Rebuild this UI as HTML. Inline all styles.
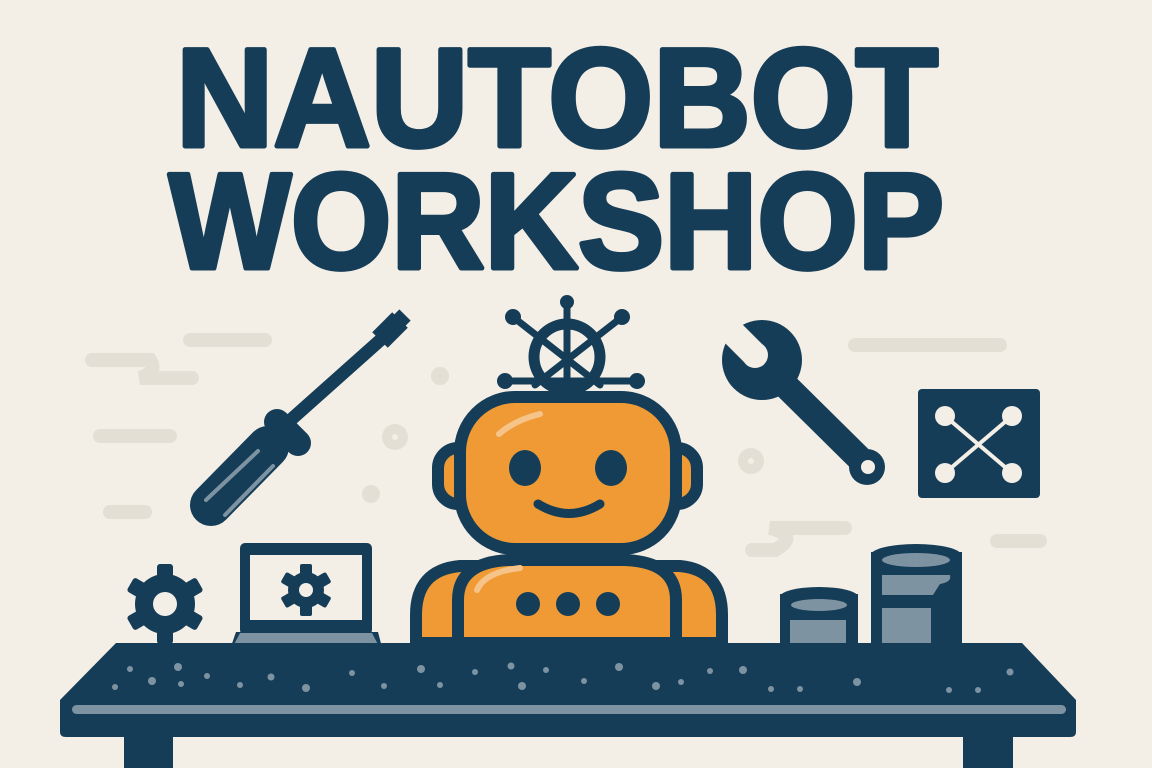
<!DOCTYPE html>
<html><head><meta charset="utf-8"><style>
html,body{margin:0;padding:0;background:#f4efe6;}
svg{display:block}
</style></head><body>
<svg width="1152" height="768" viewBox="0 0 1152 768" xmlns="http://www.w3.org/2000/svg">
<rect width="1152" height="768" fill="#f4efe6"/>
<g fill="#163d57" stroke="#163d57" stroke-width="5" stroke-linejoin="round" font-family="Liberation Sans, Arial, sans-serif" font-weight="bold">
<text x="176" y="146" font-size="140" textLength="762" lengthAdjust="spacingAndGlyphs">NAUTOBOT</text>
<text x="169" y="268" font-size="136" textLength="775" lengthAdjust="spacingAndGlyphs">WORKSHOP</text>
</g>
<!-- background decorations -->
<g stroke="#e4dfd5" stroke-linecap="round" fill="none" stroke-width="14">
<line x1="190" y1="340" x2="265" y2="340"/>
<path d="M92 360 H150 Q158 372 140 378 H192"/>
<line x1="100" y1="436" x2="170" y2="436"/>
<line x1="110" y1="512" x2="145" y2="512"/>
<line x1="855" y1="345" x2="1000" y2="345"/>
<path d="M845 528 H770 Q800 536 775 550 H752"/>
<line x1="997" y1="541" x2="1040" y2="541"/>
</g>
<g fill="#e4dfd5">
<circle cx="395" cy="437" r="13"/><circle cx="395" cy="437" r="3" fill="#f4efe6"/>
<circle cx="371" cy="494" r="9"/>
<circle cx="440" cy="376" r="9"/>
<circle cx="751" cy="461" r="13"/><circle cx="751" cy="461" r="3" fill="#f4efe6"/>
</g>
<!-- screwdriver -->
<g fill="#163d57" stroke="#163d57" stroke-linecap="round">
<line x1="395" y1="327" x2="285" y2="425" stroke-width="13"/>
<line x1="400" y1="320" x2="380" y2="340" stroke-width="22" stroke-linecap="butt"/>
<line x1="405" y1="315" x2="398" y2="322" stroke-width="16" stroke-linecap="butt"/>
<line x1="277" y1="422" x2="298" y2="443" stroke-width="26"/>
<line x1="268" y1="447" x2="211" y2="505" stroke-width="42"/>
</g>
<g stroke="#7e93a2" stroke-width="4" stroke-linecap="round">
<line x1="258" y1="451" x2="206" y2="500"/>
<line x1="273" y1="466" x2="225" y2="515"/>
</g>
<!-- wrench -->
<g fill="#163d57" stroke="#163d57" stroke-linecap="round">
<circle cx="762" cy="360" r="40" stroke="none"/>
<line x1="780" y1="380" x2="866" y2="465" stroke-width="26"/>
<circle cx="867" cy="467" r="18" stroke="none"/>
</g>
<g fill="#f4efe6">
<polygon points="764,346 724,306 706,324 746,364"/>
<circle cx="755" cy="355" r="13"/>
<circle cx="868" cy="467" r="7"/>
</g>
<!-- network box -->
<rect x="918" y="389" width="122" height="109" rx="4" fill="#163d57"/>
<g stroke="#f4efe6" stroke-width="4"><line x1="945" y1="416" x2="1012" y2="473"/><line x1="1012" y1="416" x2="945" y2="473"/></g>
<g fill="#f4efe6"><circle cx="945" cy="416" r="10"/><circle cx="1012" cy="416" r="10"/><circle cx="945" cy="473" r="10"/><circle cx="1012" cy="473" r="10"/></g>
<!-- cans -->
<g>
<rect x="780" y="594" width="78" height="75" fill="#163d57"/>
<ellipse cx="819" cy="597" rx="39" ry="10" fill="#163d57"/>
<ellipse cx="819" cy="605" rx="28" ry="6" fill="#7e93a2"/>
<path d="M790 620 H846 V666 Q818 676 790 666 Z" fill="#7e93a2"/>
<rect x="871" y="552" width="91" height="120" fill="#163d57"/>
<ellipse cx="916" cy="555" rx="45" ry="11" fill="#163d57"/>
<ellipse cx="916" cy="560" rx="34" ry="7" fill="#7e93a2"/>
<path d="M882 575 H950 Q952 582 940 584 Q936 590 933 595 H882 Z" fill="#7e93a2"/>
<path d="M882 608 H931 V668 Q906 676 882 668 Z" fill="#7e93a2"/>
</g>
<!-- gears -->
<g fill="#163d57">
<g transform="translate(165,604)">
<circle r="30"/>
<rect x="-8" y="-40" width="16" height="16" rx="3"/>
<rect x="-8" y="-40" width="16" height="16" rx="3" transform="rotate(60)"/>
<rect x="-8" y="-40" width="16" height="16" rx="3" transform="rotate(120)"/>
<rect x="-8" y="-40" width="16" height="16" rx="3" transform="rotate(180)"/>
<rect x="-8" y="-40" width="16" height="16" rx="3" transform="rotate(240)"/>
<rect x="-8" y="-40" width="16" height="16" rx="3" transform="rotate(300)"/>
<circle r="12" fill="#f4efe6"/>
</g>
</g>
<!-- laptop -->
<rect x="240" y="543" width="132" height="92" rx="5" fill="#163d57"/>
<rect x="250" y="555" width="112" height="65" fill="#f4efe6"/>
<g fill="#163d57" transform="translate(306,590)">
<circle r="18"/>
<rect x="-6" y="-26" width="12" height="11" rx="2"/>
<rect x="-6" y="-26" width="12" height="11" rx="2" transform="rotate(60)"/>
<rect x="-6" y="-26" width="12" height="11" rx="2" transform="rotate(120)"/>
<rect x="-6" y="-26" width="12" height="11" rx="2" transform="rotate(180)"/>
<rect x="-6" y="-26" width="12" height="11" rx="2" transform="rotate(240)"/>
<rect x="-6" y="-26" width="12" height="11" rx="2" transform="rotate(300)"/>
<circle r="7" fill="#f4efe6"/>
</g>
<path d="M236 632 H378 L384 655 H228 Z" fill="#163d57"/>
<path d="M240 633 H372 L383 654 H229 Z" fill="#7e93a2"/>
<rect x="288" y="645" width="37" height="10" rx="5" fill="#163d57"/>
<!-- helm -->
<g stroke="#163d57" fill="none" stroke-linecap="round">
<circle cx="567" cy="357" r="33" stroke-width="11"/>
<g stroke-width="7">
<line x1="567" y1="300" x2="567" y2="395"/>
<line x1="513" y1="317" x2="600" y2="385"/>
<line x1="622" y1="317" x2="535" y2="385"/>
<line x1="505" y1="381" x2="630" y2="381"/>
</g>
</g>
<g fill="#163d57"><circle cx="567" cy="302" r="7"/><circle cx="513" cy="317" r="8"/><circle cx="622" cy="317" r="8"/><circle cx="505" cy="381" r="8"/><circle cx="637" cy="381" r="8"/></g>
<!-- robot body -->
<g stroke="#163d57" stroke-width="12" fill="#ef9a35">
<path d="M416 643 V615 Q416 570 460 566 H680 Q722 570 722 615 V643 Z"/>
<path d="M458 643 V600 Q458 562 510 560 H625 Q676 562 676 600 V643 Z"/>
<rect x="438" y="448" width="44" height="56" rx="20"/>
<rect x="653" y="448" width="44" height="56" rx="20"/>
<rect x="460" y="397" width="216" height="152" rx="55"/>
</g>
<g stroke="#f6c489" stroke-width="6" stroke-linecap="round" fill="none">
<path d="M499 434 Q515 420 540 414"/>
<path d="M477 590 Q485 572 520 568"/>
</g>
<g fill="#163d57">
<ellipse cx="525" cy="468" rx="16" ry="18"/><ellipse cx="611" cy="468" rx="16" ry="18"/>
<circle cx="528" cy="604" r="12"/><circle cx="568" cy="604" r="12"/><circle cx="608" cy="604" r="12"/>
</g>
<path d="M538 504 Q569 523 600 504" stroke="#163d57" stroke-width="9" fill="none" stroke-linecap="round"/>
<!-- table -->
<path d="M116 643 H1022 L1076 700 V732 Q1076 737 1070 737 H66 Q60 737 60 732 V700 Z" fill="#163d57"/>
<rect x="72" y="705" width="994" height="9" rx="4.5" fill="#7e93a2"/>
<rect x="124" y="735" width="49" height="33" fill="#163d57"/>
<rect x="963" y="735" width="50" height="33" fill="#163d57"/>
<g fill="#7e93a2">
<circle cx="130" cy="669" r="3"/><circle cx="178" cy="667" r="4"/><circle cx="207" cy="676" r="3"/><circle cx="152" cy="681" r="4"/><circle cx="181" cy="684" r="3"/><circle cx="115" cy="687" r="3"/><circle cx="240" cy="685" r="3"/><circle cx="271" cy="677" r="3.5"/><circle cx="306" cy="688" r="4"/><circle cx="352" cy="673" r="3"/><circle cx="384" cy="686" r="3"/><circle cx="421" cy="669" r="4"/><circle cx="440" cy="685" r="3"/><circle cx="475" cy="672" r="3"/><circle cx="511" cy="666" r="3.5"/><circle cx="522" cy="686" r="4"/><circle cx="546" cy="670" r="3"/><circle cx="584" cy="681" r="3"/><circle cx="619" cy="667" r="4"/><circle cx="656" cy="686" r="4"/><circle cx="681" cy="682" r="3"/><circle cx="710" cy="671" r="3"/><circle cx="743" cy="670" r="4"/><circle cx="771" cy="689" r="3"/><circle cx="800" cy="689" r="3"/><circle cx="857" cy="682" r="4"/><circle cx="949" cy="690" r="3"/><circle cx="978" cy="690" r="3"/><circle cx="1010" cy="672" r="3.5"/>
</g>
</svg>
</body></html>
